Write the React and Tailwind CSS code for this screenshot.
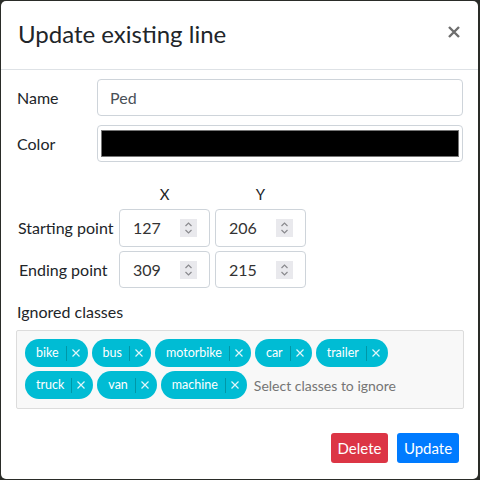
import React from "react";

const font = { fontFamily: 'Lato, "Open Sans", sans-serif' };

function Spinner() {
  return (
    <div className="w-[17px] h-[18px] bg-[#e9e9ed] flex items-center justify-center">
      <svg width="9" height="14" viewBox="0 0 9 14" fill="none" stroke="#8a8a8e" strokeWidth="1.2">
        <path d="M1.5 5 L4.5 2 L7.5 5" />
        <path d="M1.5 9 L4.5 12 L7.5 9" />
      </svg>
    </div>
  );
}

function NumInput({ value }) {
  return (
    <div className="w-[91px] h-full border border-[#ced4da] rounded-[4px] bg-white flex items-center pl-[13px] pr-[12px] justify-between">
      <span className="text-[16px] text-[#333]">{value}</span>
      <Spinner />
    </div>
  );
}

function Chip({ label }) {
  return (
    <div className="h-[28px] rounded-full bg-[#00bcd4] flex items-center pl-[11px] pr-[8px] text-white shrink-0">
      <span className="text-[12.5px] leading-none">{label}</span>
      <span className="w-px h-[15px] bg-[#0097a7] ml-[7px] mr-[5px]" />
      <svg width="8" height="8" viewBox="0 0 8 8" stroke="#e0f7fa" strokeWidth="1.2">
        <path d="M0.5 0.5 L7.5 7.5 M7.5 0.5 L0.5 7.5" />
      </svg>
    </div>
  );
}

export default function App() {
  return (
    <div className="w-[480px] h-[480px] bg-[#2a2c28] overflow-hidden pt-px pl-px" style={font}>
      <div className="w-[477px] h-[478px] bg-white rounded-[5px] flex flex-col">
        <div className="h-[69px] border-b border-[#dee2e6] flex items-center justify-between pl-[17px] pr-[18px] shrink-0">
          <h5 className="text-[24px] text-[#212529] leading-none -mt-[2px]">Update existing line</h5>
          <svg width="12" height="12" viewBox="0 0 12 12" stroke="#6e6e6e" strokeWidth="2.4" className="-mt-[7px]">
            <path d="M1 1 L11 11 M11 1 L1 11" />
          </svg>
        </div>
        <div className="pl-[16px] pr-[15px] pt-[9px] flex flex-col">
          <div className="flex items-center h-[37px]">
            <span className="w-[80px] text-[16px] text-[#212529]">Name</span>
            <div className="flex-1 h-full border border-[#ced4da] rounded-[4px] flex items-center pl-[12px] text-[16px] text-[#495057]">Ped</div>
          </div>
          <div className="flex items-center h-[37px] mt-[9px]">
            <span className="w-[80px] text-[16px] text-[#212529]">Color</span>
            <div className="flex-1 h-full border border-[#ced4da] rounded-[4px] flex items-center px-[3px]">
              <div className="w-full h-[27px] bg-black border border-[#767676]" />
            </div>
          </div>
          <div className="flex mt-[22px] h-[20px] items-center text-[15px] text-[#212529]">
            <span className="w-[102px]" />
            <span className="w-[91px] text-center">X</span>
            <span className="w-[5px]" />
            <span className="w-[91px] text-center">Y</span>
          </div>
          <div className="flex items-center h-[38px] mt-[5px]">
            <span className="w-[102px] pl-[1px] text-[16px] text-[#212529] whitespace-nowrap">Starting point</span>
            <NumInput value="127" />
            <span className="w-[5px]" />
            <NumInput value="206" />
          </div>
          <div className="flex items-center h-[37px] mt-[4px]">
            <span className="w-[102px] pl-[2px] text-[16px] text-[#212529] whitespace-nowrap">Ending point</span>
            <NumInput value="309" />
            <span className="w-[5px]" />
            <NumInput value="215" />
          </div>
          <div className="mt-[12px] h-[24px] flex items-center text-[16px] text-[#212529]">Ignored classes</div>
          <div className="mt-[6px] -ml-px w-[448px] border border-[#dcdcdc] rounded-[2px] bg-[#f8f8f8] pl-[8px] pt-[8px] pb-[9px] pr-[8px] flex flex-col gap-[4px]">
            <div className="flex gap-[4px] items-center">
              {["bike", "bus", "motorbike", "car", "trailer"].map((c) => (
                <Chip key={c} label={c} />
              ))}
            </div>
            <div className="flex gap-[4px] items-center">
              {["truck", "van", "machine"].map((c) => (
                <Chip key={c} label={c} />
              ))}
              <span className="text-[14px] text-[#757575] ml-[3px] whitespace-nowrap">Select classes to ignore</span>
            </div>
          </div>
        </div>
        <div className="mt-auto mb-[16px] flex justify-end gap-[9px] pr-[19px]">
          <button className="w-[57px] h-[30px] rounded-[3px] bg-[#dc3545] text-white text-[15px]">Delete</button>
          <button className="w-[62px] h-[30px] rounded-[3px] bg-[#007bff] text-white text-[15px]">Update</button>
        </div>
      </div>
    </div>
  );
}
